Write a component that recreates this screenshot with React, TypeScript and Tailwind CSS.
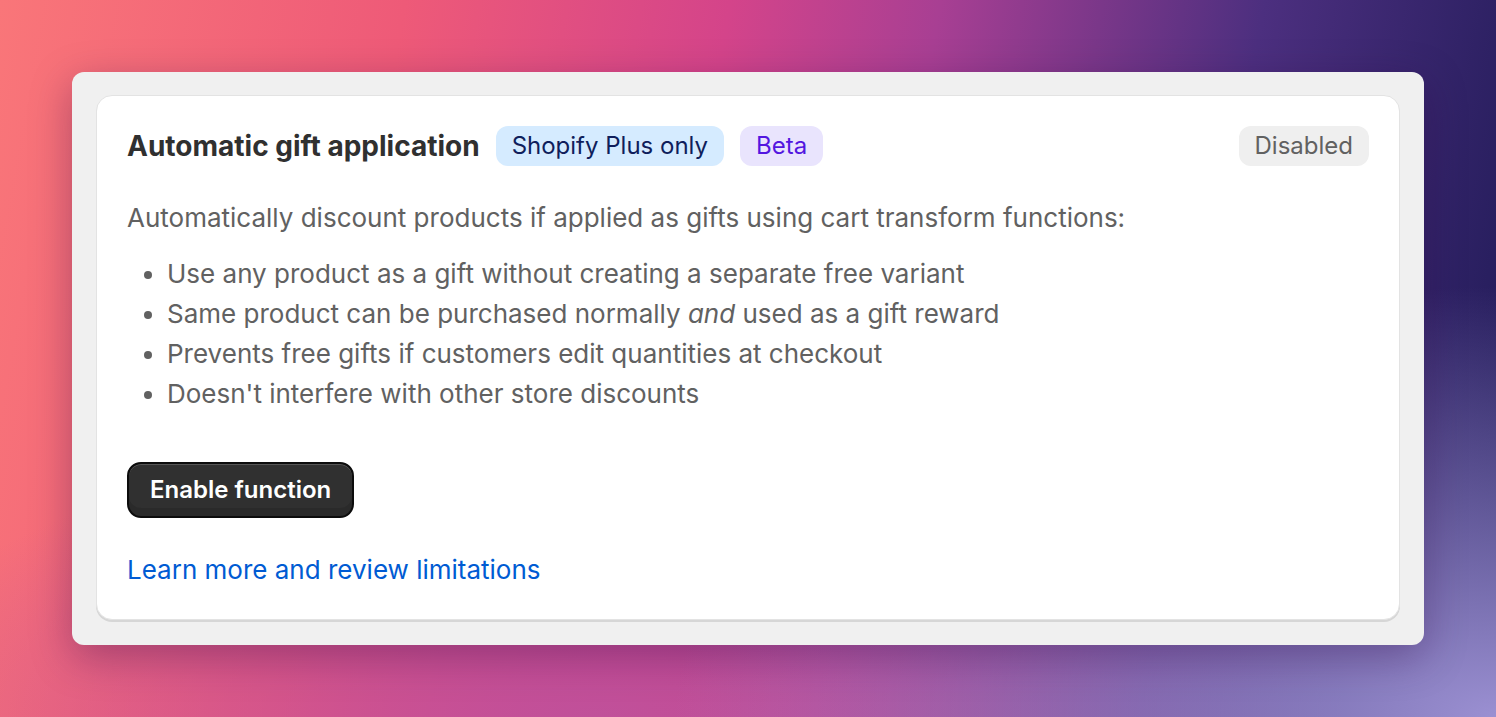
import React from "react";

export default function App() {
  const bullets: React.ReactNode[] = [
    "Use any product as a gift without creating a separate free variant",
    <>
      Same product can be purchased normally <em>and</em> used as a gift reward
    </>,
    "Prevents free gifts if customers edit quantities at checkout",
    "Doesn't interfere with other store discounts",
  ];
  return (
    <div
      className="h-[717px] w-[1496px] p-[72px] bg-[radial-gradient(ellipse_55%_60%_at_100%_100%,#9b90d2_0%,rgba(155,144,210,0)_100%),radial-gradient(ellipse_50%_40%_at_40%_100%,#c0509a_0%,rgba(192,80,154,0)_100%),linear-gradient(100deg,#f97679_0%,#ee5a78_25%,#d4448a_45%,#a83f93_58%,#4c2f7f_78%,#1e1a56_100%)]"
      style={{ fontFamily: "Inter, 'Noto Sans', sans-serif" }}
    >
      <div className="h-full w-full rounded-[12px] bg-[#f0f0f0] p-[24px] pt-[23px] shadow-[0_12px_40px_rgba(50,10,70,0.35)]">
        <div className="h-[525px] rounded-[16px] border border-[#e3e3e3] bg-white px-[30px] pt-[30px] shadow-[0_2px_0_0_#d6d6d6]">
          <div className="flex items-center justify-between">
            <div className="flex items-center gap-[16px]">
              <h2 className="text-[28px] font-bold leading-[40px] text-[#303030]">
                Automatic gift application
              </h2>
              <span className="flex h-[40px] items-center rounded-[12px] bg-[#d5ebff] px-[16px] text-[24px] text-[#0f1e5c]">
                Shopify Plus only
              </span>
              <span className="flex h-[40px] items-center rounded-[12px] bg-[#e9e4fd] px-[16px] text-[24px] text-[#5316e0]">
                Beta
              </span>
            </div>
            <span className="flex h-[40px] items-center rounded-[12px] bg-[#efefef] px-[16px] text-[24px] text-[#616161]">
              Disabled
            </span>
          </div>
          <p className="mt-[32px] text-[26px] leading-[40px] text-[#616161]">
            Automatically discount products if applied as gifts using cart transform functions:
          </p>
          <ul className="mt-[16px] list-disc pl-[40px] text-[26px] leading-[40px] text-[#616161] marker:text-[#616161]">
            {bullets.map((b, i) => (
              <li key={i}>{b}</li>
            ))}
          </ul>
          <button className="mt-[48px] flex h-[56px] items-center rounded-[14px] border-2 border-[#0c0c0c] bg-[#303030] px-[21px] text-[24px] font-semibold text-white shadow-[inset_0_1px_0_#555,inset_0_-8px_0_#2a2a2a]">
            Enable function
          </button>
          <a className="mt-[32px] block w-fit text-[26px] leading-[40px] text-[#005bd3]" href="#">
            Learn more and review limitations
          </a>
        </div>
      </div>
    </div>
  );
}
